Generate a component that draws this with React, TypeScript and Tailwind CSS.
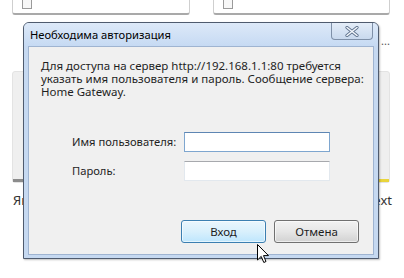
import React from 'react';

function CloseGlyph() {
  return (
    <svg width="14" height="11" viewBox="0 0 14 11">
      <path d="M2 1.5 L12 9.5 M12 1.5 L2 9.5" stroke="#5c6f8a" strokeWidth="3.2" strokeLinecap="round" fill="none" />
      <path d="M2 1.5 L12 9.5 M12 1.5 L2 9.5" stroke="#f4f8fd" strokeWidth="1.6" strokeLinecap="round" fill="none" />
    </svg>
  );
}

function Cursor() {
  return (
    <svg width="13" height="20" viewBox="0 0 13 20" className="absolute left-[257px] top-[244px]">
      <path d="M0.5 0.5 L0.5 16 L4.2 12.4 L6.8 18.5 L9 17.5 L6.5 11.6 L11.5 11.6 Z" fill="#fff" stroke="#000" strokeWidth="1" strokeLinejoin="miter" />
    </svg>
  );
}

export default function App() {
  return (
    <div
      className="relative w-[404px] h-[278px] overflow-hidden bg-white text-[12px] text-black"
      style={{ fontFamily: '"Noto Sans", "Open Sans", sans-serif' }}
    >
      {/* page behind the dialog */}
      <div className="flex flex-col px-[12px]">
        <div className="flex gap-[23px] -mt-[10px]">
          <div className="w-[178px] h-[25px] border border-[#cfcfcf] border-b-[2px] border-b-[#a9a9a9] rounded-b-[3px] bg-white pl-[9px] pt-[8px]">
            <div className="w-[10px] h-[10px] border border-[#9a9a9a] bg-[#f7f7f7]" />
          </div>
          <div className="w-[177px] h-[25px] border border-[#cfcfcf] border-b-[2px] border-b-[#a9a9a9] rounded-b-[3px] bg-white pl-[9px] pt-[8px]">
            <div className="w-[10px] h-[10px] border border-[#9a9a9a] bg-[#f7f7f7]" />
          </div>
        </div>
        <div className="mt-[56px] w-[378px] h-[112px] flex flex-col justify-end rounded-[3px] bg-[#efefef] border border-[#e3e3e3]">
          <div className="flex h-[3px]">
            <div className="flex-1 bg-[#8c8c8c]" />
            <div className="w-[16px] bg-[#e9d53c]" />
          </div>
        </div>
        <div className="flex justify-between mt-[9px] text-[13px] text-[#333] leading-[16px]">
          <span className="pl-[1px]">Яндекс</span>
          <span>Next</span>
        </div>
      </div>

      <span className="absolute left-[381px] top-[33px] text-[11px] text-[#555]">...</span>

      {/* dialog */}
      <div className="absolute left-[23px] top-[22px] w-[356px] h-[237px] flex flex-col rounded-t-[6px] border border-[#4f5b6e] bg-[#c6d9f1] shadow-[1px_1px_2px_rgba(0,0,0,0.25)]">
        <div className="relative h-[23px] flex items-center pl-[6px] rounded-t-[5px] bg-gradient-to-b from-[#dde9f8] to-[#c6daf3]">
          <span className="text-[11.2px] text-black leading-none">Необходима авторизация</span>
          <div className="absolute right-[5px] top-0 w-[42px] h-[17px] flex items-center justify-center rounded-b-[4px] border border-t-0 border-[#7f90a8] bg-gradient-to-b from-[#e4edf8] to-[#c9d9ee]">
            <CloseGlyph />
          </div>
        </div>
        <div className="flex-1 mx-[4px] mb-[3px] border border-[#9fb4d1] bg-[#f0f0f0] flex flex-col px-[12px] pt-[12px]">
          <p className="leading-[13px] text-[11.5px] text-[#1e1e1e] w-[336px]">
            Для доступа на сервер http://192.168.1.1:80 требуется указать имя пользователя и пароль. Сообщение сервера: Home Gateway.
          </p>
          <div className="mt-[34px] flex flex-col gap-[9px]">
            <div className="flex items-center">
              <span className="w-[143px] pl-[31px] text-[11.2px] text-[#1e1e1e]">Имя пользователя:</span>
              <div className="w-[146px] h-[20px] bg-white border border-[#7ea6cf] border-t-[#5e86b3]" />
            </div>
            <div className="flex items-center">
              <span className="w-[143px] pl-[31px] text-[11.2px] text-[#1e1e1e]">Пароль:</span>
              <div className="w-[146px] h-[20px] bg-white border border-[#e2e8ee] border-t-[#a7a9ad]" />
            </div>
          </div>
          <div className="mt-[39px] flex justify-end gap-[8px] pr-[2px]">
            <button className="w-[85px] h-[23px] rounded-[3px] border border-[#3c7fb1] bg-gradient-to-b from-[#eaf6fd] via-[#d9f0fc] to-[#bee6fd] text-[11.5px] text-[#1e1e1e] shadow-[inset_0_0_0_1px_rgba(255,255,255,0.6)]">
              Вход
            </button>
            <button className="w-[85px] h-[23px] rounded-[3px] border border-[#707070] bg-gradient-to-b from-[#f2f2f2] via-[#e6e6e6] to-[#d2d2d2] text-[11.5px] text-[#1e1e1e] shadow-[inset_0_0_0_1px_rgba(255,255,255,0.6)]">
              Отмена
            </button>
          </div>
        </div>
      </div>

      <Cursor />
    </div>
  );
}
